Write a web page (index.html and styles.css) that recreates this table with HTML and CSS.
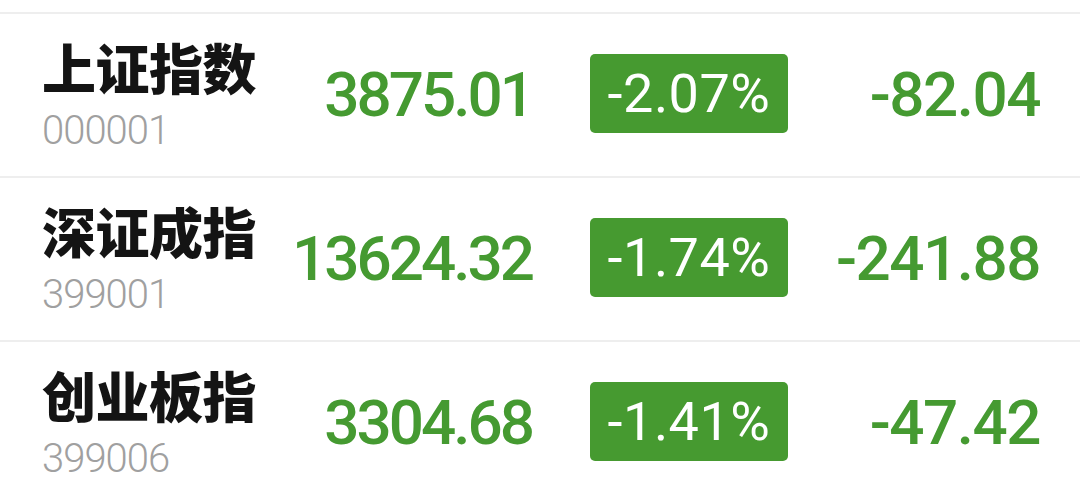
FILE: index.html
```html
<!DOCTYPE html>
<html lang="zh-CN">
<head>
<meta charset="utf-8">
<link rel="stylesheet" href="styles.css">
</head>
<body>
<div class="list">
  <div class="row">
    <div class="name-block">
      <div class="name">上证指数</div>
      <div class="code">000001</div>
    </div>
    <div class="price">3875.01</div>
    <div class="badge">-2.07%</div>
    <div class="change">-82.04</div>
  </div>
  <div class="row">
    <div class="name-block">
      <div class="name">深证成指</div>
      <div class="code">399001</div>
    </div>
    <div class="price">13624.32</div>
    <div class="badge">-1.74%</div>
    <div class="change">-241.88</div>
  </div>
  <div class="row">
    <div class="name-block">
      <div class="name">创业板指</div>
      <div class="code">399006</div>
    </div>
    <div class="price">3304.68</div>
    <div class="badge">-1.41%</div>
    <div class="change">-47.42</div>
  </div>
</div>
</body>
</html>
```

FILE: styles.css
```css
html, body {
  margin: 0;
  padding: 0;
  background: #ffffff;
}

body {
  width: 1080px;
  height: 500px;
  overflow: hidden;
  font-family: Roboto, "Noto Sans CJK SC", sans-serif;
}

.list {
  padding-top: 12px;
}

.row {
  display: grid;
  grid-template-columns: 200px 290px 256px 252px;
  align-items: center;
  height: 162px;
  border-top: 2px solid #eeeeee;
  padding: 0 40px 0 42px;
}

.name-block {
  display: flex;
  flex-direction: column;
  margin-bottom: 1px;
}

.name {
  font-family: "Noto Sans CJK SC", sans-serif;
  font-weight: 800;
  font-size: 54px;
  line-height: 60px;
  color: #141414;
  white-space: nowrap;
  letter-spacing: -0.5px;
}

.code {
  margin-top: 13px;
  font-family: Roboto, sans-serif;
  font-weight: 300;
  font-size: 40px;
  line-height: 42px;
  color: #a0a0a0;
  letter-spacing: -1px;
}

.price {
  justify-self: end;
  font-size: 62px;
  font-weight: 500;
  color: #459a31;
  letter-spacing: -3px;
  line-height: 1;
}

.badge {
  justify-self: end;
  width: 198px;
  height: 79px;
  box-sizing: border-box;
  background: #469a30;
  border-radius: 5px;
  color: #ffffff;
  font-size: 54px;
  font-weight: 400;
  display: flex;
  align-items: center;
  justify-content: center;
  letter-spacing: 0.5px;
  margin-bottom: 4px;
}

.change {
  justify-self: end;
  font-size: 62px;
  font-weight: 500;
  color: #459a31;
  letter-spacing: -1.5px;
  line-height: 1;
}
```
